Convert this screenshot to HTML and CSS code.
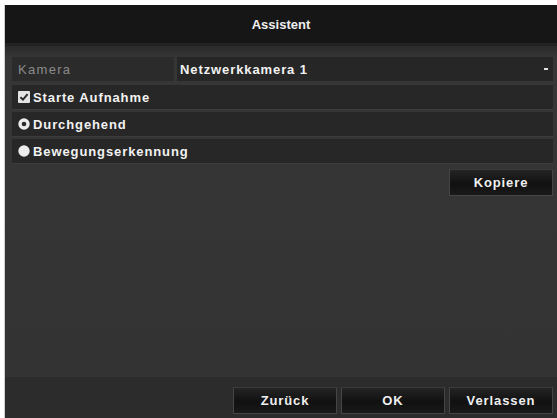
FILE: index.html
```html
<!DOCTYPE html>
<html lang="de">
<head>
<meta charset="utf-8">
<title>Assistent</title>
<link rel="stylesheet" href="styles.css">
</head>
<body>
<div class="frame">
  <div class="titlebar">Assistent</div>
  <div class="content">
    <div class="row split">
      <div class="cell label">Kamera</div>
      <div class="cell value"><span>Netzwerkkamera 1</span><span class="dash"></span></div>
    </div>
    <div class="row">
      <span class="check">
        <svg width="12" height="12" viewBox="0 0 12 12"><rect x="0" y="0" width="12" height="12" rx="1" fill="#e4e4e4"/><path d="M2.4 6.2 L5 8.7 L9.6 3.2" stroke="#2a2a2a" stroke-width="1.9" fill="none"/></svg>
      </span>
      <span class="text">Starte Aufnahme</span>
    </div>
    <div class="row">
      <span class="check">
        <svg width="12" height="12" viewBox="0 0 12 12"><circle cx="6" cy="6" r="5.7" fill="#ececec"/><circle cx="6" cy="6" r="2.3" fill="#2a2a2a"/></svg>
      </span>
      <span class="text">Durchgehend</span>
    </div>
    <div class="row">
      <span class="check">
        <svg width="12" height="12" viewBox="0 0 12 12"><circle cx="6" cy="6" r="5.7" fill="#ececec"/></svg>
      </span>
      <span class="text">Bewegungserkennung</span>
    </div>
    <div class="actions">
      <button class="btn">Kopiere</button>
    </div>
  </div>
  <div class="footer">
    <button class="btn">Zurück</button>
    <button class="btn">OK</button>
    <button class="btn">Verlassen</button>
  </div>
</div>
</body>
</html>
```
FILE: styles.css
```css
html, body {
  margin: 0;
  padding: 0;
  background: #ffffff;
}
body {
  width: 557px;
  height: 418px;
  overflow: hidden;
  font-family: "Liberation Sans", Arial, sans-serif;
}
.frame {
  margin: 5px 0 0 4px;
  width: 553px;
  height: 413px;
  background: #323232;
  display: flex;
  flex-direction: column;
  border-left: 1px solid #cfcfcf;
  box-sizing: border-box;
}
.titlebar {
  height: 38px;
  background: #161616;
  color: #f0f0f0;
  font-size: 13px;
  font-weight: bold;
  display: flex;
  align-items: center;
  justify-content: center;
  border-bottom: 3px solid #222;
}
.content {
  flex: 1;
  padding: 11px 4px 0 7px;
  display: flex;
  flex-direction: column;
  background: linear-gradient(#2a2a2a 0, #363636 12px, #333 100%);
}
.row {
  height: 24px;
  margin-bottom: 2px;
  background: #272727;
  display: flex;
  align-items: center;
  color: #f2f2f2;
  font-size: 13px;
  font-weight: bold;
  letter-spacing: 0.9px;
  border-bottom: 1px solid #3c3c3c;
}
.row.split {
  background: transparent;
  margin-bottom: 4px;
  gap: 3px;
  border-bottom: none;
}
.cell {
  height: 100%;
  display: flex;
  align-items: center;
  box-sizing: border-box;
}
.label {
  width: 162px;
  background: #2b2b2b;
  color: #8a8a8a;
  padding-left: 6px;
  font-weight: normal;
  letter-spacing: 1.3px;
}
.value {
  flex: 1;
  background: #262626;
  padding-left: 3px;
  padding-right: 5px;
  justify-content: space-between;
}
.dash {
  width: 4px;
  height: 2px;
  background: #e0e0e0;
}
.check {
  width: 12px;
  height: 12px;
  margin: 0 3px 0 6px;
  display: flex;
}
.actions {
  display: flex;
  justify-content: flex-end;
  margin-top: 3px;
}
.btn {
  width: 104px;
  height: 27px;
  background: linear-gradient(#242424, #111 55%, #191919);
  border: 1px solid #454545;
  border-top-color: #3a3a3a;
  color: #efefef;
  font-family: "Liberation Sans", Arial, sans-serif;
  font-size: 13px;
  font-weight: bold;
  letter-spacing: 0.9px;
  padding: 0;
}
.footer {
  height: 41px;
  background: #2c2c2c;
  display: flex;
  justify-content: flex-end;
  align-items: flex-start;
  gap: 4px;
  padding: 10px 4px 0 0;
  box-sizing: border-box;
}
```
